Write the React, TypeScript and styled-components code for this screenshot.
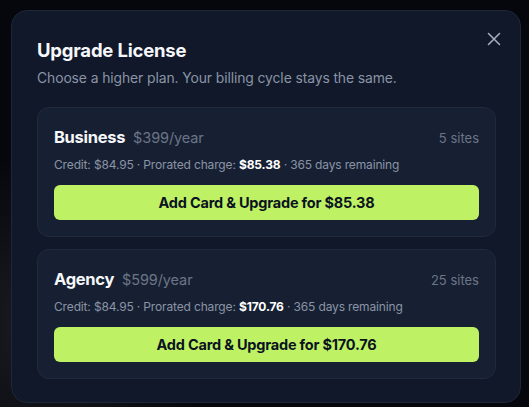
import React from "react";
import styled, { createGlobalStyle } from "styled-components";

const GlobalStyle = createGlobalStyle`
  html, body {
    margin: 0;
    padding: 0;
    background: #05070c;
    font-family: Inter, "Noto Sans", sans-serif;
  }
  * { box-sizing: border-box; }
`;

const Backdrop = styled.div`
  width: 529px;
  height: 407px;
  padding: 10px 8px 4px 11px;
  background: radial-gradient(circle at 8% 80%, #1a1c22 0%, #05070c 30%),
    #05070c;
`;

const Modal = styled.div`
  position: relative;
  width: 510px;
  height: 393px;
  background: #101829;
  border: 1px solid #1e2738;
  border-radius: 16px;
  padding: 26px 24px 24px 25px;
  display: flex;
  flex-direction: column;
`;

const CloseButton = styled.button`
  position: absolute;
  top: 19px;
  right: 17px;
  width: 18px;
  height: 18px;
  padding: 0;
  border: none;
  background: transparent;
  color: #a3adbd;
  display: flex;
  align-items: center;
  justify-content: center;
  cursor: pointer;
`;

const Title = styled.h2`
  margin: 0;
  font-size: 18.5px;
  font-weight: 700;
  color: #f5f7fa;
  line-height: 26px;
  letter-spacing: -0.2px;
`;

const Subtitle = styled.p`
  margin: 4px 0 0;
  font-size: 13.9px;
  color: #8a94a6;
  line-height: 22px;
  letter-spacing: -0.1px;
`;

const CardList = styled.div`
  display: flex;
  flex-direction: column;
  gap: 12px;
  margin-top: 18px;
`;

const Card = styled.div`
  background: #172032;
  border: 1px solid #212a3c;
  border-radius: 12px;
  padding: 19px 16px 16px 16px;
  height: 130px;
  display: flex;
  flex-direction: column;
`;

const CardHeader = styled.div`
  display: flex;
  align-items: baseline;
  justify-content: space-between;
`;

const PlanName = styled.div`
  display: flex;
  align-items: baseline;
  gap: 8px;
`;

const Name = styled.span`
  font-size: 16.5px;
  font-weight: 700;
  color: #f5f7fa;
  letter-spacing: -0.3px;
`;

const Price = styled.span`
  font-size: 14.5px;
  color: #6b7587;
  letter-spacing: -0.1px;
`;

const Sites = styled.span`
  font-size: 13px;
  color: #6b7587;
`;

const Details = styled.div`
  margin-top: 9px;
  font-size: 12px;
  color: #8a94a6;
  letter-spacing: -0.15px;
  line-height: 18px;

  strong {
    color: #ffffff;
    font-weight: 700;
  }
`;

const UpgradeButton = styled.button`
  margin-top: 11px;
  height: 35px;
  width: 100%;
  border: none;
  border-radius: 6px;
  background: #bef264;
  color: #0b1220;
  font-family: inherit;
  font-size: 14.5px;
  font-weight: 700;
  letter-spacing: -0.2px;
  cursor: pointer;
`;

type Plan = {
  name: string;
  price: string;
  sites: string;
  charge: string;
};

const plans: Plan[] = [
  { name: "Business", price: "$399/year", sites: "5 sites", charge: "$85.38" },
  { name: "Agency", price: "$599/year", sites: "25 sites", charge: "$170.76" },
];

const App = () => {
  return (
    <>
      <GlobalStyle />
      <Backdrop>
        <Modal>
          <CloseButton aria-label="Close">
            <svg width="14" height="14" viewBox="0 0 14 14" fill="none">
              <path
                d="M1.5 1.5L12.5 12.5M12.5 1.5L1.5 12.5"
                stroke="currentColor"
                strokeWidth="1.6"
                strokeLinecap="round"
              />
            </svg>
          </CloseButton>
          <Title>Upgrade License</Title>
          <Subtitle>
            Choose a higher plan. Your billing cycle stays the same.
          </Subtitle>
          <CardList>
            {plans.map((plan) => (
              <Card key={plan.name}>
                <CardHeader>
                  <PlanName>
                    <Name>{plan.name}</Name>
                    <Price>{plan.price}</Price>
                  </PlanName>
                  <Sites>{plan.sites}</Sites>
                </CardHeader>
                <Details>
                  Credit: $84.95 · Prorated charge:{" "}
                  <strong>{plan.charge}</strong> · 365 days remaining
                </Details>
                <UpgradeButton>Add Card &amp; Upgrade for {plan.charge}</UpgradeButton>
              </Card>
            ))}
          </CardList>
        </Modal>
      </Backdrop>
    </>
  );
};

export default App;
